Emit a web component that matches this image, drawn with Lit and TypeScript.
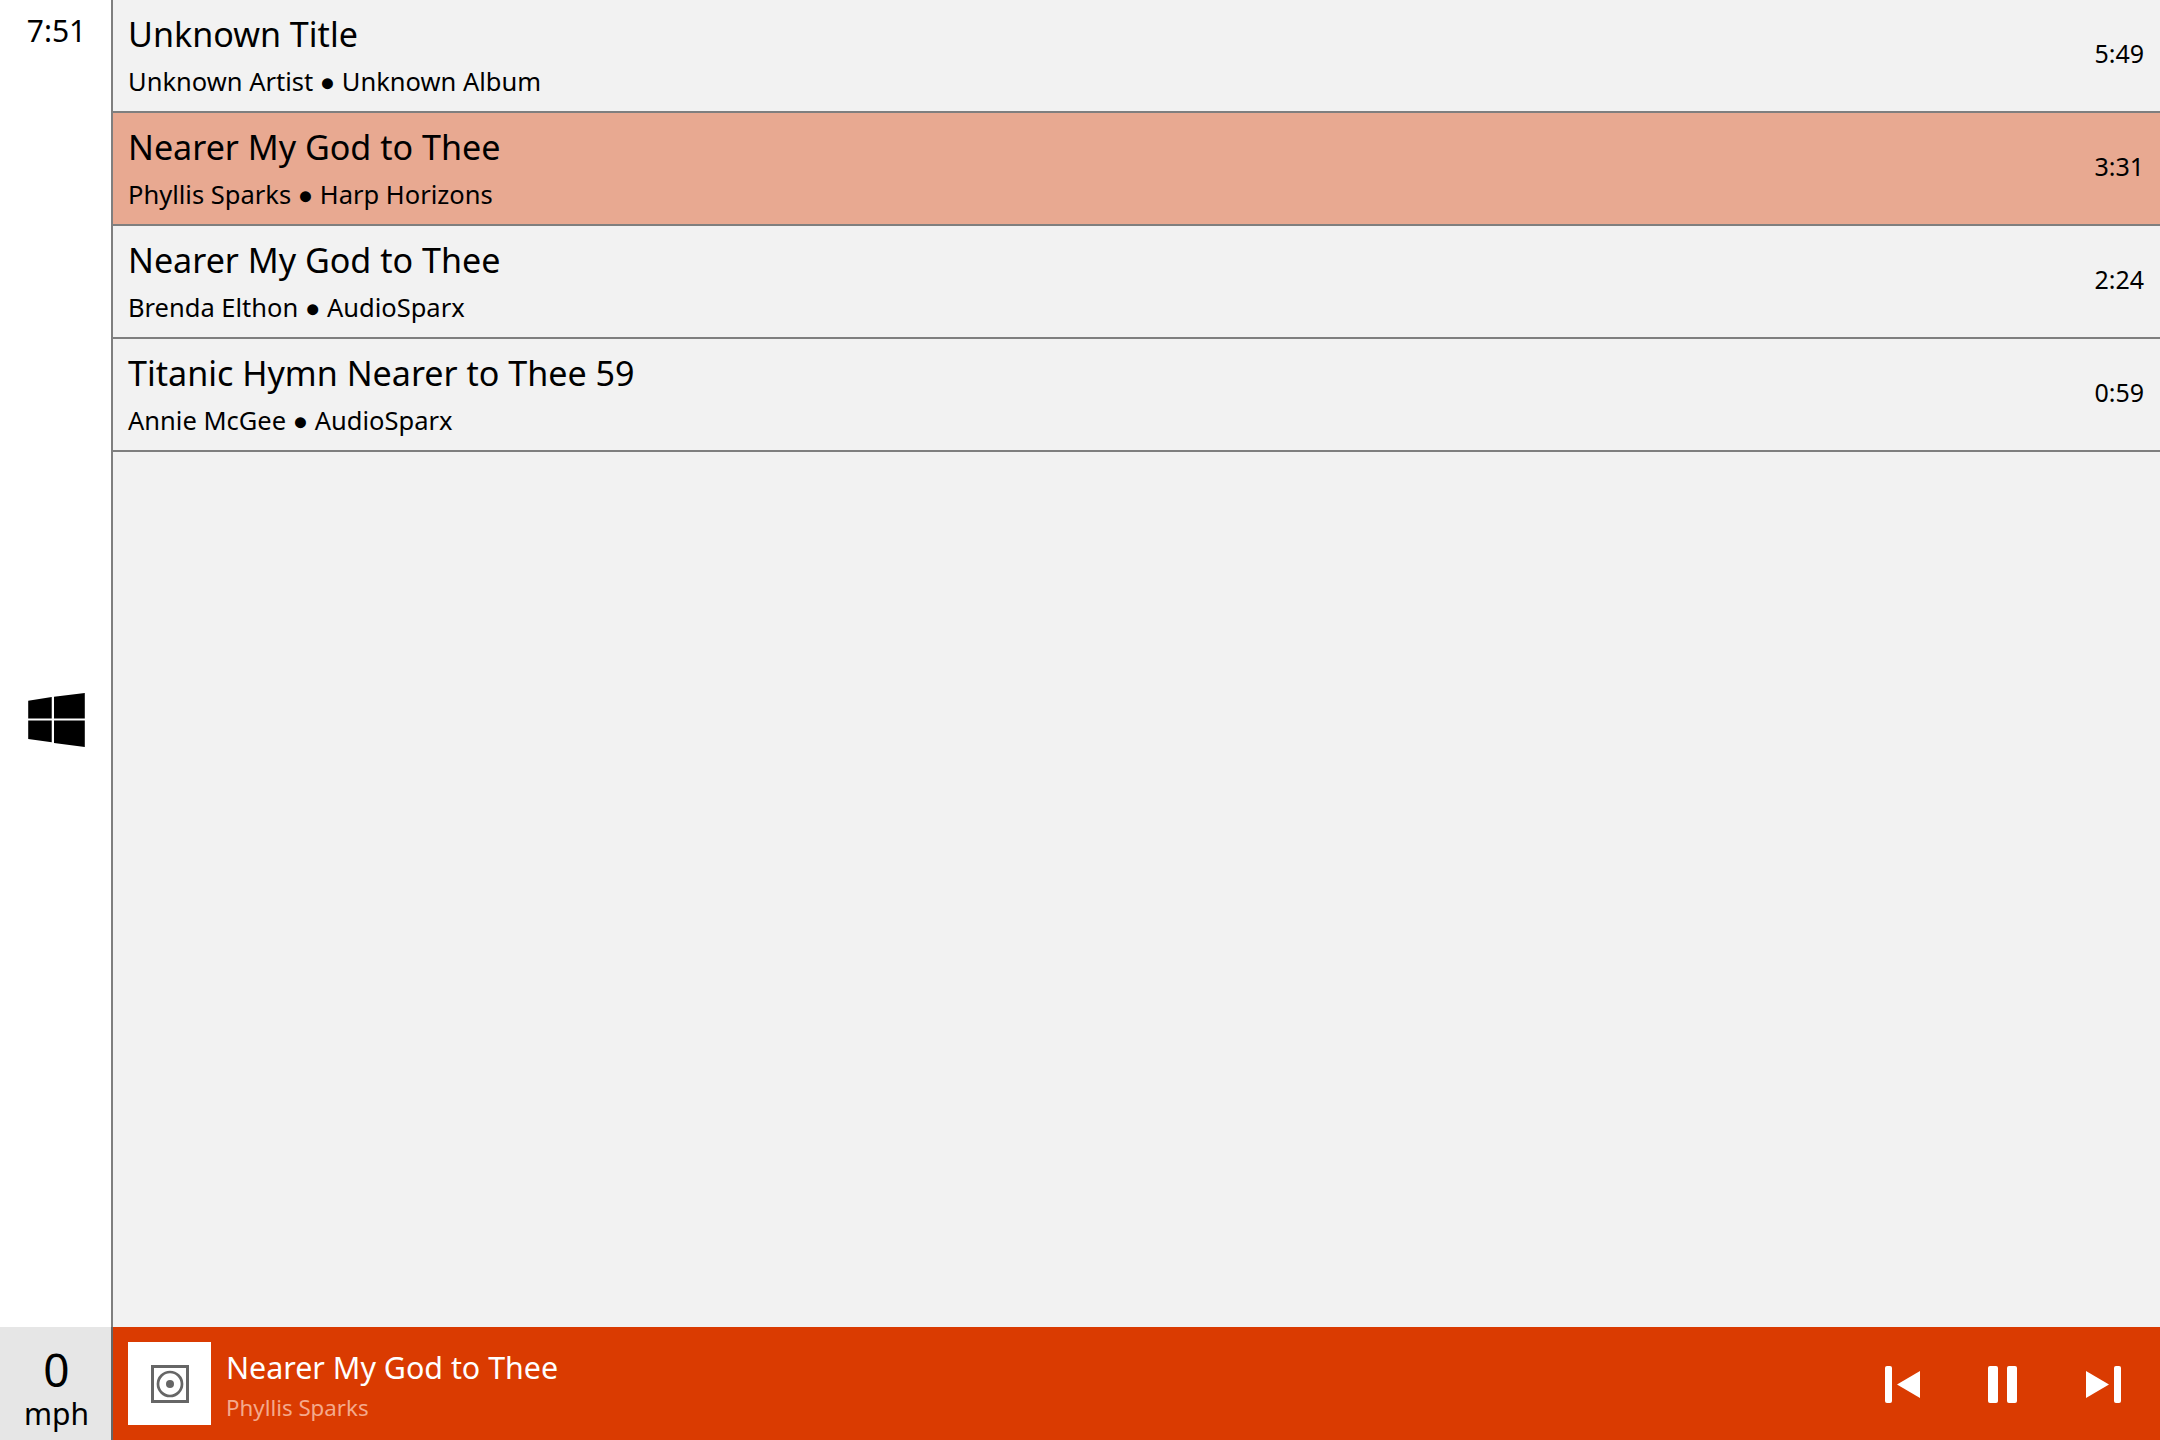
import { LitElement, html, css } from "lit";
import { customElement } from "lit/decorators.js";

const tracks = [
  { t: "Unknown Title", s: "Unknown Artist ● Unknown Album", d: "5:49" },
  { t: "Nearer My God to Thee", s: "Phyllis Sparks ● Harp Horizons", d: "3:31", sel: true },
  { t: "Nearer My God to Thee", s: "Brenda Elthon ● AudioSparx", d: "2:24" },
  { t: "Titanic Hymn Nearer to Thee 59", s: "Annie McGee ● AudioSparx", d: "0:59" },
];

@customElement("app-root")
export class AppRoot extends LitElement {
  static styles = css`
    :host {
      display: grid;
      grid-template-columns: 111px 1fr;
      grid-template-rows: 1fr 113px;
      width: 2160px;
      height: 1440px;
      font-family: "Noto Sans", "Open Sans", sans-serif;
      color: #000;
      overflow: hidden;
    }
    .side {
      background: #fff;
      display: grid;
      padding-left: 2px;
      justify-items: center;
    }
    .clock { font-size: 30px; line-height: 40px; margin-top: 11px; align-self: start; grid-area: 1/1; }
    .win { grid-area: 1/1; align-self: center; width: 57px; height: 54px; margin-top: 113px; }
    .main {
      background: #f2f2f2;
      border-left: 2px solid #7f7f7f;
      display: flex;
      flex-direction: column;
    }
    .row {
      height: 111px;
      border-bottom: 2px solid #7f7f7f;
      display: flex;
      align-items: center;
      justify-content: space-between;
      padding: 0 16px 0 15px;
      flex: none;
    }
    .row.sel { background: #e8a991; }
    .txt { display: flex; flex-direction: column; }
    .title { font-size: 34.1px; line-height: 44px; margin-top: -1px; }
    .sub { font-size: 25.5px; line-height: 36px; margin-top: 7px; }
    .dur { font-size: 25px; line-height: 34px; margin-bottom: 5px; }
    .speed {
      background: #e6e6e6;
      display: flex;
      flex-direction: column;
      align-items: center;
      padding-left: 2px;
    }
    .speed .n { font-size: 46px; line-height: 54px; margin-top: 15px; }
    .speed .u { font-size: 30px; line-height: 36px; }
    .bar {
      background: #da3b01;
      border-left: 2px solid #666;
      display: flex;
      align-items: center;
      padding: 0 39px 0 15px;
    }
    .art {
      width: 83px;
      height: 83px;
      background: #fff;
      display: flex;
      align-items: center;
      justify-content: center;
      flex: none;
    }
    .art svg { width: 38px; height: 38px; display: block; }
    .now { margin: 3px 0 0 15px; flex: 1; display: flex; flex-direction: column; }
    .now .a { font-size: 30.4px; line-height: 42px; color: #fff; }
    .now .b { font-size: 22.3px; line-height: 32px; color: #f4a98c; margin-top: 3px; }
    .ctl { display: flex; align-items: center; gap: 68px; margin-top: 2px; }
    .ctl svg { display: block; fill: #fff; height: 37px; }
    .ctl .next { margin-left: 1px; }
  `;

  render() {
    return html`
      <div class="side">
        <div class="clock">7:51</div>
        <svg class="win" viewBox="28 693 57 54.4">
          <path d="M28 700.7 51.7 697V718.7H28Z M54 696.7 85 693V718.7H54Z M28 720.7H51.7V742.7L28 739.3Z M54 720.7H85V747.3L54 743.3Z" />
        </svg>
      </div>
      <div class="main">
        ${tracks.map(
          (r) => html`<div class="row ${r.sel ? "sel" : ""}">
            <div class="txt"><div class="title">${r.t}</div><div class="sub">${r.s}</div></div>
            <div class="dur">${r.d}</div>
          </div>`
        )}
      </div>
      <div class="speed"><div class="n">0</div><div class="u">mph</div></div>
      <div class="bar">
        <div class="art">
          <svg viewBox="0 0 38 38">
            <rect x="1.5" y="1.5" width="35" height="35" fill="none" stroke="#666" stroke-width="3" />
            <circle cx="19" cy="19" r="12" fill="none" stroke="#666" stroke-width="2.7" />
            <circle cx="19" cy="19" r="4" fill="#666" />
          </svg>
        </div>
        <div class="now"><div class="a">Nearer My God to Thee</div><div class="b">Phyllis Sparks</div></div>
        <div class="ctl">
          <svg viewBox="0 0 35 37" width="35">
            <rect x="0" y="0" width="7" height="37" rx="2" />
            <path d="M35 5V32L12 18.5Z" />
          </svg>
          <svg viewBox="0 0 29 37" width="29">
            <rect x="0" y="0" width="10" height="37" rx="2" />
            <rect x="19" y="0" width="10" height="37" rx="2" />
          </svg>
          <svg class="next" viewBox="0 0 35 37" width="35">
            <path d="M0 5V32L23 18.5Z" />
            <rect x="28" y="0" width="7" height="37" rx="2" />
          </svg>
        </div>
      </div>
    `;
  }
}
